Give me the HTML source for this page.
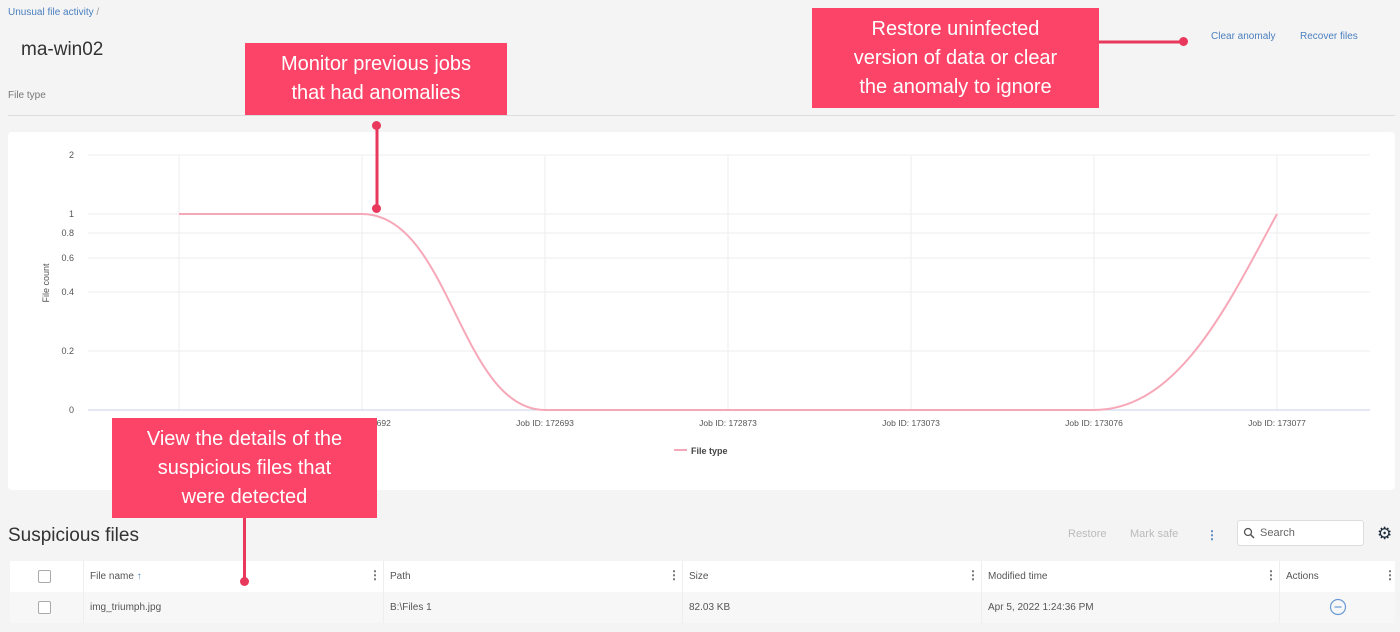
<!DOCTYPE html>
<html><head><style>
*{margin:0;padding:0;box-sizing:border-box}
body{width:1400px;height:632px;background:#f4f4f4;font-family:"Liberation Sans",sans-serif;position:relative;overflow:hidden;color:#333}
.a{position:absolute}
.call{position:absolute;background:#fb4467;color:#fff;font-size:20px;line-height:29px;text-align:center;display:flex;align-items:center;justify-content:center}
.dot{position:absolute;width:9px;height:9px;border-radius:50%;background:#e8395c}
.th{font-size:10px;color:#555}
.cb{position:absolute;width:13px;height:13px;border:1px solid #aaa;border-radius:2px;background:#fff}
</style></head><body>
<div class="a" style="left:8px;top:7px;font-size:10px;color:#4a7fbf">Unusual file activity <span style="color:#999">/</span></div>
<div class="a" style="left:21px;top:39px;font-size:19px;color:#333">ma-win02</div>
<div class="a" style="left:8px;top:90px;font-size:10px;color:#777">File type</div>
<div class="a" style="left:8px;top:115px;width:1387px;height:1px;background:#ddd"></div>
<div class="a" style="left:1211px;top:31px;font-size:10px;color:#4a7fbf">Clear anomaly</div>
<div class="a" style="left:1300px;top:31px;font-size:10px;color:#4a7fbf">Recover files</div>

<div class="a" style="left:8px;top:132px;width:1387px;height:358px;background:#fff;border-radius:4px"></div>
<svg class="a" style="left:0;top:0" width="1400" height="632">
<g stroke="#eee" stroke-width="1">
<line x1="88" y1="155" x2="1370" y2="155"/><line x1="88" y1="214" x2="1370" y2="214"/><line x1="88" y1="233" x2="1370" y2="233"/><line x1="88" y1="258" x2="1370" y2="258"/><line x1="88" y1="292" x2="1370" y2="292"/><line x1="88" y1="351" x2="1370" y2="351"/>
<line x1="179" y1="155" x2="179" y2="410"/><line x1="362" y1="155" x2="362" y2="410"/><line x1="545" y1="155" x2="545" y2="410"/><line x1="728" y1="155" x2="728" y2="410"/><line x1="911" y1="155" x2="911" y2="410"/><line x1="1094" y1="155" x2="1094" y2="410"/><line x1="1277" y1="155" x2="1277" y2="410"/>
</g>
<line x1="88" y1="410" x2="1370" y2="410" stroke="#c8d2e8"/>
<g font-size="9" fill="#555" text-anchor="end" font-family="Liberation Sans">
<text x="74" y="158">2</text><text x="74" y="217">1</text><text x="74" y="236">0.8</text><text x="74" y="261">0.6</text><text x="74" y="295">0.4</text><text x="74" y="354">0.2</text><text x="74" y="413">0</text></g>
<text x="49" y="283" font-size="9" fill="#555" transform="rotate(-90 49 283)" text-anchor="middle" font-family="Liberation Sans">File count</text>
<g font-size="8.5" fill="#555" text-anchor="middle" font-family="Liberation Sans">
<text x="362" y="426">Job ID: 172692</text><text x="545" y="426">Job ID: 172693</text><text x="728" y="426">Job ID: 172873</text><text x="911" y="426">Job ID: 173073</text><text x="1094" y="426">Job ID: 173076</text><text x="1277" y="426">Job ID: 173077</text></g>
<path d="M179 214 L362 214 C450 214 460 410 545 410 L1094 410 C1180 410 1230 300 1277 214" fill="none" stroke="#f7a8b8" stroke-width="2"/>
<line x1="674" y1="450" x2="687" y2="450" stroke="#f7a8b8" stroke-width="2"/>
<text x="691" y="454" font-size="9" fill="#444" font-weight="bold" font-family="Liberation Sans">File type</text>
<g stroke="#e8395c" stroke-width="3"><line x1="377" y1="126" x2="377" y2="208"/><line x1="1099" y1="42" x2="1183" y2="42"/></g>
</svg>
<div class="dot" style="left:372px;top:121px"></div><div class="dot" style="left:372px;top:204px"></div>
<div class="dot" style="left:1179px;top:37px"></div>
<div class="call" style="left:245px;top:43px;width:262px;height:72px">Monitor previous jobs<br>that had anomalies</div>
<div class="call" style="left:812px;top:8px;width:287px;height:100px">Restore uninfected<br>version of data or clear<br>the anomaly to ignore</div>

<div class="a" style="left:8px;top:525px;font-size:19px;color:#333">Suspicious files</div>
<div class="a" style="left:1068px;top:528px;font-size:11px;color:#bbb">Restore</div>
<div class="a" style="left:1130px;top:528px;font-size:11px;color:#bbb">Mark safe</div>
<div class="a" style="left:1206px;top:528px;font-size:12px;color:#4a7fbf;font-weight:bold">⋮</div>
<div class="a" style="left:1237px;top:520px;width:127px;height:26px;background:#fff;border:1px solid #ddd;border-radius:3px;font-size:11px;color:#666;padding:6px 0 0 22px">Search</div>
<svg class="a" style="left:1243px;top:527px" width="12" height="12"><circle cx="5" cy="5" r="3.5" fill="none" stroke="#555" stroke-width="1.3"/><line x1="7.5" y1="7.5" x2="11" y2="11" stroke="#555" stroke-width="1.5"/></svg>
<div class="a" style="left:1377px;top:524px;font-size:17px;color:#1d2a3a">⚙</div>

<div class="a" style="left:10px;top:561px;width:1385px;height:31px;background:#fff"></div>
<div class="a" style="left:10px;top:592px;width:1385px;height:31px;background:#f7f7f7"></div>
<div class="a" style="left:83px;top:561px;width:1px;height:62px;background:#eee"></div>
<div class="a" style="left:383px;top:561px;width:1px;height:62px;background:#eee"></div>
<div class="a" style="left:682px;top:561px;width:1px;height:62px;background:#eee"></div>
<div class="a" style="left:981px;top:561px;width:1px;height:62px;background:#eee"></div>
<div class="a" style="left:1279px;top:561px;width:1px;height:62px;background:#eee"></div>
<div class="cb" style="left:38px;top:570px"></div><div class="cb" style="left:38px;top:601px"></div>
<div class="a th" style="left:90px;top:571px">File name <span style="color:#4a7fbf">↑</span></div>
<div class="a th" style="left:390px;top:571px">Path</div>
<div class="a th" style="left:689px;top:571px">Size</div>
<div class="a th" style="left:988px;top:571px">Modified time</div>
<div class="a th" style="left:1286px;top:571px">Actions</div>
<div class="a" style="left:369px;top:568px;font-size:12px;color:#666;font-weight:bold">⋮</div>
<div class="a" style="left:668px;top:568px;font-size:12px;color:#666;font-weight:bold">⋮</div>
<div class="a" style="left:967px;top:568px;font-size:12px;color:#666;font-weight:bold">⋮</div>
<div class="a" style="left:1265px;top:568px;font-size:12px;color:#666;font-weight:bold">⋮</div>
<div class="a" style="left:1384px;top:568px;font-size:12px;color:#666;font-weight:bold">⋮</div>
<div class="a th" style="left:90px;top:602px">img_triumph.jpg</div>
<div class="a th" style="left:390px;top:602px">B:\Files 1</div>
<div class="a th" style="left:689px;top:602px">82.03 KB</div>
<div class="a th" style="left:988px;top:602px">Apr 5, 2022 1:24:36 PM</div>
<svg class="a" style="left:1329px;top:598px" width="18" height="18"><circle cx="9" cy="9" r="7.5" fill="none" stroke="#6a9ad6" stroke-width="1.2"/><line x1="5.5" y1="9" x2="12.5" y2="9" stroke="#6a9ad6" stroke-width="1.2"/></svg>

<div class="a" style="left:243px;top:518px;width:3px;height:63px;background:#e8395c"></div>
<div class="dot" style="left:240px;top:577px"></div>
<div class="call" style="left:112px;top:418px;width:265px;height:100px">View the details of the<br>suspicious files that<br>were detected</div>
</body></html>
